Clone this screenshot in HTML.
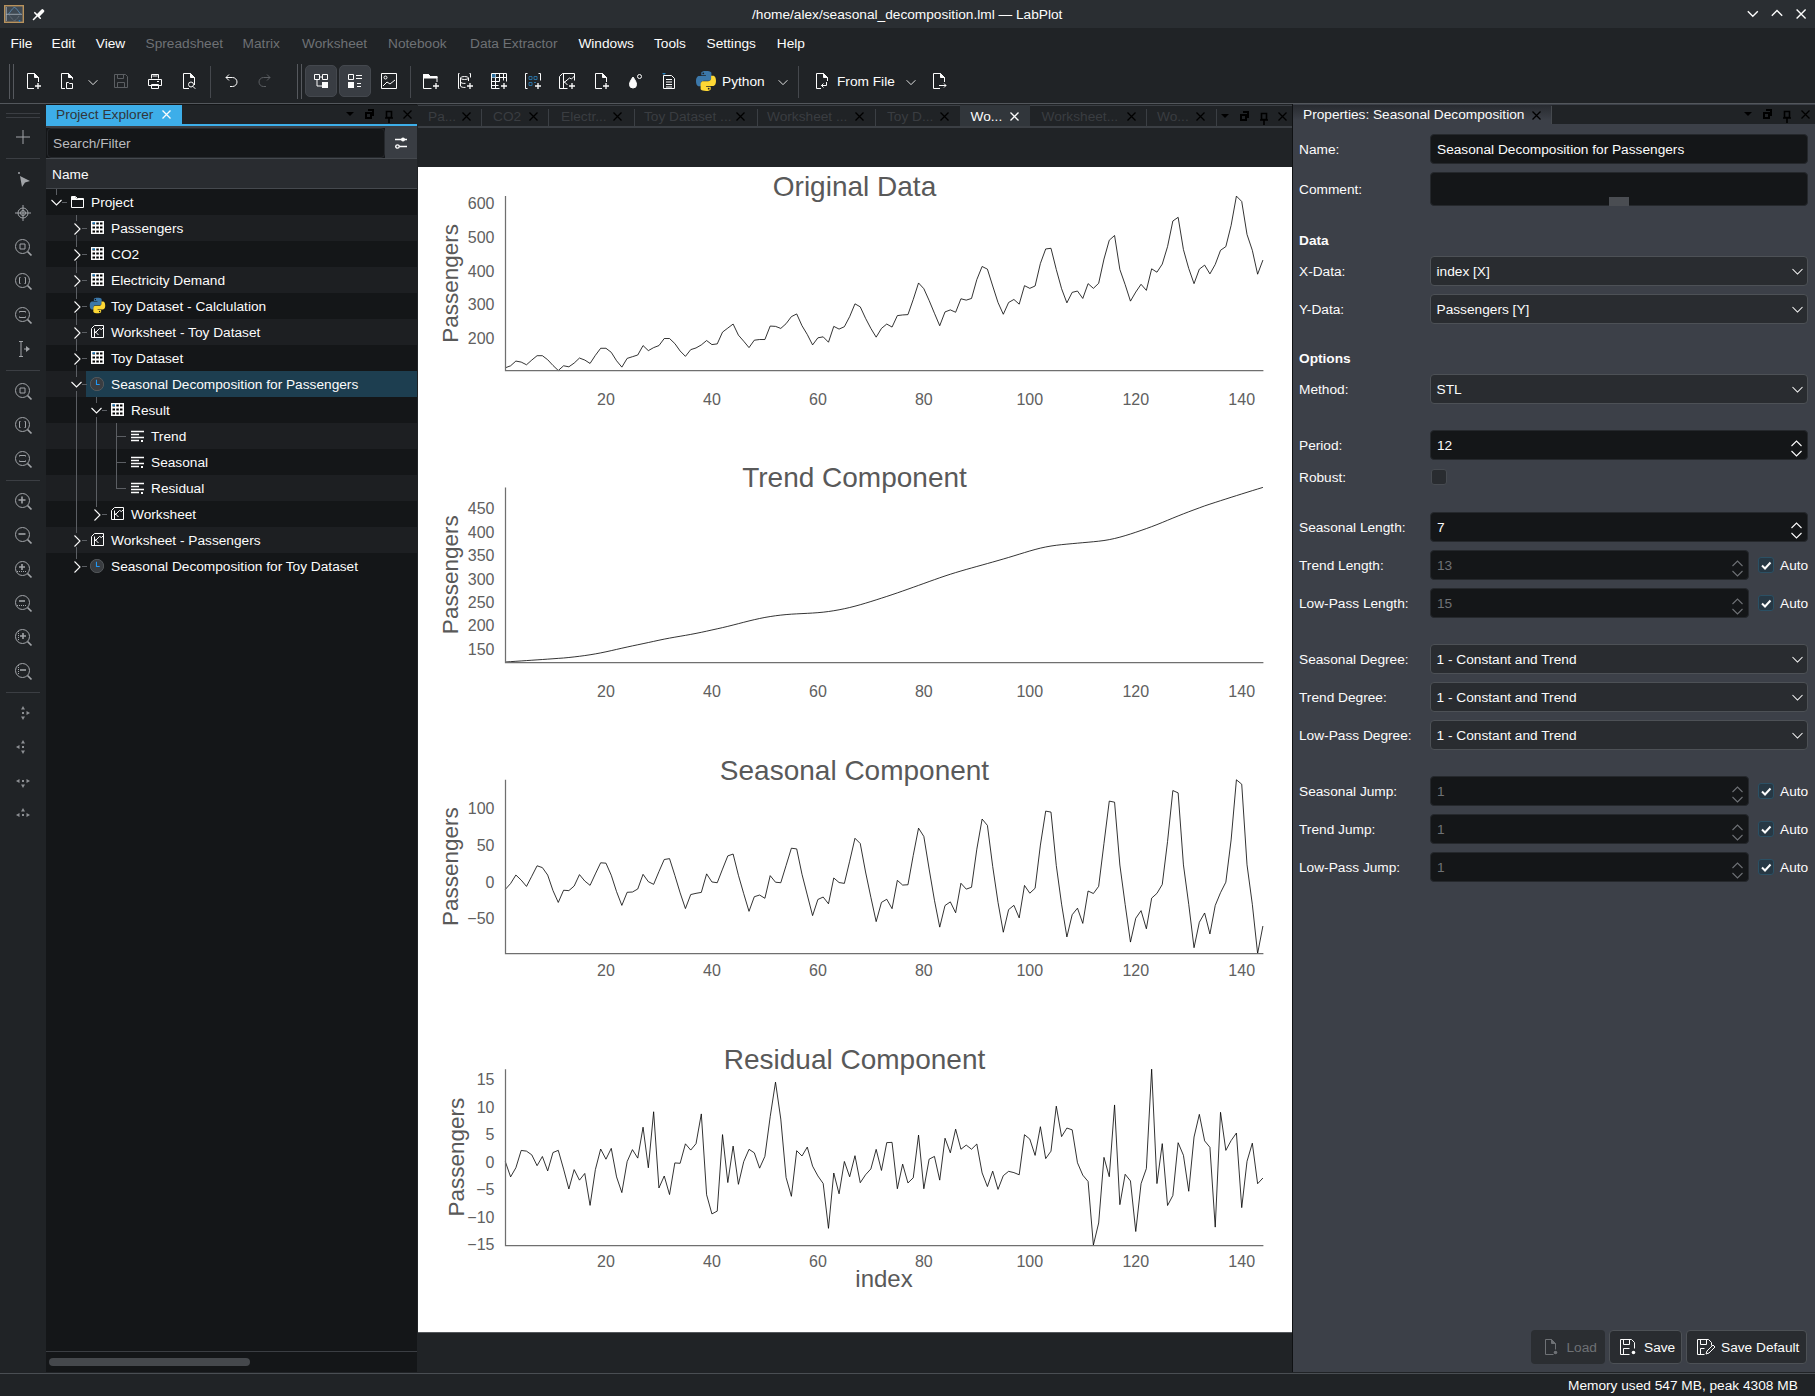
<!DOCTYPE html>
<html><head><meta charset="utf-8"><title>LabPlot</title>
<style>
html,body{margin:0;padding:0;width:1815px;height:1396px;overflow:hidden;background:#202326;font-family:"Liberation Sans", sans-serif;}
.r{position:absolute;}
.t{position:absolute;white-space:nowrap;line-height:20px;height:20px;}
svg text{font-family:"Liberation Sans", sans-serif;}
</style></head><body>
<div class="r" style="left:0px;top:0px;width:1815px;height:28px;background:#2a2e32;"></div><div class="r" style="left:0px;top:28px;width:1815px;height:75px;background:#202326;"></div><div class="r" style="left:0px;top:103px;width:1815px;height:1px;background:#53575c;"></div><div class="r" style="left:0px;top:104px;width:46px;height:1268px;background:#202326;"></div><div class="r" style="left:46px;top:104px;width:371px;height:1268px;background:#141618;"></div><div class="r" style="left:417px;top:104px;width:876px;height:1268px;background:#202326;"></div><div class="r" style="left:418px;top:167px;width:874px;height:1165px;background:#ffffff;"></div><div class="r" style="left:1293px;top:104px;width:522px;height:1268px;background:#3c4048;"></div><div class="r" style="left:0px;top:1373px;width:1815px;height:1px;background:#4a4e53;"></div><div class="r" style="left:0px;top:1374px;width:1815px;height:22px;background:#202326;"></div><svg class="r" style="left:4px;top:5px" width="20" height="18" viewBox="0 0 20 18"><rect x="0.7" y="0.7" width="18.6" height="16.6" fill="#3f4953" stroke="#b8925c" stroke-width="1.4"/><path d="M2.3 2v14 M2 9.3h16" stroke="#aab4bc" stroke-width="0.8" fill="none"/><path d="M4.5 9C7 6 9 2.5 10.5 2.5S14 6 16.5 9" stroke="#5d8fb8" stroke-width="0.9" fill="none"/><path d="M5.5 10.5C7.5 13 9 15.5 10.5 15.5S13.5 13 15.5 10.5" stroke="#7b848c" stroke-width="0.7" fill="none" stroke-dasharray="1 0.6"/><circle cx="15.5" cy="15.8" r="0.9" fill="#1d7fd0"/></svg><svg class="r" style="left:32px;top:7px" width="14" height="14" viewBox="0 0 14 14"><path d="M1.5 12.5L5.5 8.5" stroke="#fcfcfc" stroke-width="1.6" stroke-linecap="round"/><path d="M2.8 5.7L8.3 11.2" stroke="#fcfcfc" stroke-width="1.6" stroke-linecap="round"/><path d="M4.5 7.5L9.5 2.5a1.2 1.2 0 0 1 1.7 0l.8.8a1.2 1.2 0 0 1 0 1.7L7 10z" fill="#fcfcfc"/></svg><div class="t" style="left:752px;top:5px;font-size:13.7px;color:#fcfcfc;">/home/alex/seasonal_decomposition.lml — LabPlot</div><svg class="r" style="left:1747px;top:10px;color:#fcfcfc;" width="12" height="12" viewBox="0 0 12 12" fill="none" stroke="#fcfcfc" stroke-width="1"><path d="M.8 1.2l5 5 5-5" stroke-width="1.4"/></svg><svg class="r" style="left:1771px;top:9px;color:#fcfcfc;" width="12" height="12" viewBox="0 0 12 12" fill="none" stroke="#fcfcfc" stroke-width="1"><path d="M.8 6.8l5.2-5.2 5.2 5.2" stroke-width="1.4"/></svg><svg class="r" style="left:1796px;top:9px;color:#fcfcfc;" width="10.5" height="10.5" viewBox="0 0 10.5 10.5" fill="none" stroke="#fcfcfc" stroke-width="1"><path d="M.6 .6l9 9M9.6 .6l-9 9" stroke-width="1.4"/></svg><div class="t" style="left:10.4px;top:33.5px;font-size:13.7px;color:#fcfcfc;">File</div><div class="t" style="left:51.6px;top:33.5px;font-size:13.7px;color:#fcfcfc;">Edit</div><div class="t" style="left:95.8px;top:33.5px;font-size:13.7px;color:#fcfcfc;">View</div><div class="t" style="left:145.5px;top:33.5px;font-size:13.7px;color:#6e7175;">Spreadsheet</div><div class="t" style="left:242.6px;top:33.5px;font-size:13.7px;color:#6e7175;">Matrix</div><div class="t" style="left:302px;top:33.5px;font-size:13.7px;color:#6e7175;">Worksheet</div><div class="t" style="left:388px;top:33.5px;font-size:13.7px;color:#6e7175;">Notebook</div><div class="t" style="left:470px;top:33.5px;font-size:13.7px;color:#6e7175;">Data Extractor</div><div class="t" style="left:578.4px;top:33.5px;font-size:13.7px;color:#fcfcfc;">Windows</div><div class="t" style="left:654px;top:33.5px;font-size:13.7px;color:#fcfcfc;">Tools</div><div class="t" style="left:706.5px;top:33.5px;font-size:13.7px;color:#fcfcfc;">Settings</div><div class="t" style="left:776.8px;top:33.5px;font-size:13.7px;color:#fcfcfc;">Help</div><div class="r" style="left:9px;top:64px;width:1px;height:35px;background:#56595e;"></div><div class="r" style="left:13px;top:64px;width:1px;height:35px;background:#56595e;"></div><svg class="r" style="left:25px;top:73px;color:#fcfcfc;" width="16" height="16" viewBox="0 0 16 16" fill="none" stroke="#fcfcfc" stroke-width="1"><path d="M2.5 15.5V.5h7l4 4V9M2.5 15.5H9"/><path d="M9.5 .5v4h4z" fill="currentColor"/><path d="M13 10v6M10 13h6" stroke-width="1.3"/></svg><svg class="r" style="left:59px;top:73px;color:#fcfcfc;" width="16" height="16" viewBox="0 0 16 16" fill="none" stroke="#fcfcfc" stroke-width="1"><path d="M2.5 15.5V.5h7l4 4v2M2.5 15.5H6"/><path d="M9.5 .5v4h4z" fill="currentColor"/><path d="M7.5 9.5h2l1 1h3v5h-6z"/></svg><svg class="r" style="left:113px;top:73px;color:#5b5e62;" width="16" height="16" viewBox="0 0 16 16" fill="none" stroke="#5b5e62" stroke-width="1"><path d="M1.5 1.5h11l2 2v11h-13z M4.5 1.5v4h6v-4 M4.5 14.5v-5h7v5"/></svg><svg class="r" style="left:147px;top:73px;color:#fcfcfc;" width="16" height="16" viewBox="0 0 16 16" fill="none" stroke="#fcfcfc" stroke-width="1"><path d="M4.5 5.5v-4h7v4 M1.5 12.5v-6h13v6z M4.5 11.5v4h7v-4z M10 8.5h2"/><path d="M5.5 3h5"/></svg><svg class="r" style="left:181px;top:73px;color:#fcfcfc;" width="16" height="16" viewBox="0 0 16 16" fill="none" stroke="#fcfcfc" stroke-width="1"><path d="M2.5 15.5V.5h7l4 4V12M2.5 15.5H8"/><path d="M9.5 .5v4h4z" fill="currentColor"/><circle cx="10" cy="11.5" r="2.5"/><path d="M11.8 13.3l2.5 2.5"/></svg><svg class="r" style="left:223px;top:73px;color:#fcfcfc;" width="16" height="16" viewBox="0 0 16 16" fill="none" stroke="#fcfcfc" stroke-width="1"><path d="M3 4.5h6.5a4.5 4.5 0 0 1 0 9H7"/><path d="M6 1.5l-3 3 3 3"/></svg><svg class="r" style="left:257px;top:73px;color:#5b5e62;" width="16" height="16" viewBox="0 0 16 16" fill="none" stroke="#5b5e62" stroke-width="1"><path d="M13 4.5H6.5a4.5 4.5 0 0 0 0 9H9"/><path d="M10 1.5l3 3-3 3"/></svg><svg class="r" style="left:381px;top:73px;color:#fcfcfc;" width="16" height="16" viewBox="0 0 16 16" fill="none" stroke="#fcfcfc" stroke-width="1"><path d="M.5 .5h15v15H.5z"/><circle cx="4.5" cy="4.5" r="1.5"/><path d="M2 13l4-4 3 2 5-4"/></svg><svg class="r" style="left:423px;top:73px;color:#fcfcfc;" width="16" height="16" viewBox="0 0 16 16" fill="none" stroke="#fcfcfc" stroke-width="1"><path d="M.5 15.5v-14h5l2 2h6.5V9 M.5 15.5h8"/><path d="M.5 1.5h5l2 2h6.5V5H.5z" fill="currentColor"/><path d="M13 10v6M10 13h6" stroke-width="1.3"/></svg><svg class="r" style="left:457px;top:73px;color:#fcfcfc;" width="16" height="16" viewBox="0 0 16 16" fill="none" stroke="#fcfcfc" stroke-width="1"><path d="M2.5 .5h-1v15h1 M12.5 .5h1v4"/><ellipse cx="7.5" cy="5" rx="4" ry="1.5"/><path d="M3.5 5v8a4 1.5 0 0 0 5 1.4 M3.5 9a4 1.5 0 0 0 5 1.4 M11.5 5v3"/><path d="M13 10v6M10 13h6" stroke-width="1.3"/></svg><svg class="r" style="left:491px;top:73px;color:#fcfcfc;" width="16" height="16" viewBox="0 0 16 16" fill="none" stroke="#fcfcfc" stroke-width="1"><path d="M.5 .5h15v8 M.5 .5v15h8 M.5 4.5h15 M.5 8.5h8 M.5 12.5h7 M4.5 .5v15 M8.5 .5v8 M12.5 .5v7"/><path d="M1 1h3.5v3.5H1z" fill="#2a6f9e" stroke="none"/><path d="M13 10v6M10 13h6" stroke-width="1.3"/></svg><svg class="r" style="left:525px;top:73px;color:#fcfcfc;" width="16" height="16" viewBox="0 0 16 16" fill="none" stroke="#fcfcfc" stroke-width="1"><path d="M2.5 .5h-2v15h2 M13.5 .5h2v7 M3.5 15.5"/><path d="M4 3.5h3v3H4z M9 3.5h3v3H9z M4 9.5h3v3H4z M9 9.5h2" stroke="#2a6f9e"/><path d="M13 10v6M10 13h6" stroke-width="1.3"/></svg><svg class="r" style="left:559px;top:73px;color:#fcfcfc;" width="16" height="16" viewBox="0 0 16 16" fill="none" stroke="#fcfcfc" stroke-width="1"><path d="M.5 15.5V3.5l3-3h12v7 M.5 15.5h8 M4.5 15.5V.5 M4.5 8l4 4 M4.5 10l6-5 2 1 3-3"/><path d="M13 10v6M10 13h6" stroke-width="1.3"/></svg><svg class="r" style="left:593px;top:73px;color:#fcfcfc;" width="16" height="16" viewBox="0 0 16 16" fill="none" stroke="#fcfcfc" stroke-width="1"><path d="M2.5 15.5V.5h7l4 4V9M2.5 15.5H9"/><path d="M9.5 .5v4h4z" fill="currentColor"/><path d="M13 10v6M10 13h6" stroke-width="1.3"/></svg><svg class="r" style="left:627px;top:73px;color:#fcfcfc;" width="16" height="16" viewBox="0 0 16 16" fill="none" stroke="#fcfcfc" stroke-width="1"><path d="M6 4C4 7 2.5 9 2.5 11.5a3.5 3.5 0 0 0 7 0C9.5 9 8 7 6 4z" fill="currentColor"/><circle cx="12.5" cy="3.5" r="2"/></svg><svg class="r" style="left:661px;top:73px;color:#fcfcfc;" width="16" height="16" viewBox="0 0 16 16" fill="none" stroke="#fcfcfc" stroke-width="1"><path d="M2.5 2.5h8l3 3v10h-11z M5 6.5h6 M5 9h6 M5 11.5h6 M5 14h6"/><path d="M1 0h4l-2 2z" fill="#2980b9" stroke="none"/></svg><svg class="r" style="left:814px;top:73px;color:#fcfcfc;" width="16" height="16" viewBox="0 0 16 16" fill="none" stroke="#fcfcfc" stroke-width="1"><path d="M2.5 15.5V.5h7l4 4V8M2.5 15.5H7"/><path d="M9.5 .5v4h4z" fill="currentColor"/><path d="M12.5 9v3.5h-5 M9.5 10.5l-2 2 2 2"/></svg><svg class="r" style="left:931px;top:73px;color:#fcfcfc;" width="16" height="16" viewBox="0 0 16 16" fill="none" stroke="#fcfcfc" stroke-width="1"><path d="M2.5 15.5V.5h7l4 4V9M2.5 15.5H9"/><path d="M9.5 .5v4h4z" fill="currentColor"/><path d="M8 12.5h7 M13 10.5l2 2-2 2"/></svg><svg class="r" style="left:86px;top:75px;color:#fcfcfc;" width="14" height="14" viewBox="0 0 16 16" fill="none" stroke="#fcfcfc" stroke-width="1"><path d="M3 6l5 5 5-5"/></svg><svg class="r" style="left:776px;top:75px;color:#fcfcfc;" width="14" height="14" viewBox="0 0 16 16" fill="none" stroke="#fcfcfc" stroke-width="1"><path d="M3 6l5 5 5-5"/></svg><svg class="r" style="left:904px;top:75px;color:#fcfcfc;" width="14" height="14" viewBox="0 0 16 16" fill="none" stroke="#fcfcfc" stroke-width="1"><path d="M3 6l5 5 5-5"/></svg><div class="r" style="left:210px;top:66px;width:1px;height:32px;background:#45484d;"></div><div class="r" style="left:297px;top:64px;width:1px;height:35px;background:#56595e;"></div><div class="r" style="left:301px;top:64px;width:1px;height:35px;background:#56595e;"></div><div class="r" style="left:410px;top:66px;width:1px;height:32px;background:#45484d;"></div><div class="r" style="left:798px;top:66px;width:1px;height:32px;background:#45484d;"></div><div class="r" style="left:305px;top:65px;width:32px;height:32px;background:#393d43;border:1px solid #44484e;border-radius:5px;box-sizing:border-box;"></div><div class="r" style="left:339px;top:65px;width:32px;height:32px;background:#393d43;border:1px solid #44484e;border-radius:5px;box-sizing:border-box;"></div><svg class="r" style="left:313px;top:73px;color:#fcfcfc;" width="16" height="16" viewBox="0 0 16 16" fill="none" stroke="#fcfcfc" stroke-width="1"><path d="M1.5 1.5h5v5h-5z M9.5 1.5h5v5h-5z M4 6.5v6.5h5 M6.5 4h3"/><path d="M9 9h6v6H9z" fill="currentColor" stroke="none"/></svg><svg class="r" style="left:347px;top:73px;color:#fcfcfc;" width="16" height="16" viewBox="0 0 16 16" fill="none" stroke="#fcfcfc" stroke-width="1"><path d="M1.5 1.5h5v5h-5z M9 2.5h6 M9 5.5h6 M10 10.5h4 M10 13.5h4"/><path d="M1 9h6v6H1z" fill="currentColor" stroke="none"/></svg><svg class="r" style="left:695px;top:70px" width="22" height="22" viewBox="0 0 22 22"><path d="M10.8 1C6 1 6.3 3 6.3 3v2.2h4.6v.7H4.5S1 5.5 1 11s3 5.3 3 5.3h1.9v-2.6s-.1-3 3-3h4.6s2.9 0 2.9-2.8V3.2S16.8 1 10.8 1zM8.3 2.4a.9.9 0 1 1 0 1.8.9.9 0 0 1 0-1.8z" fill="#3c78aa"/><path d="M11.2 21c4.8 0 4.5-2 4.5-2v-2.2h-4.6v-.7h6.4S21 16.5 21 11s-3-5.3-3-5.3h-1.9v2.6s.1 3-3 3H8.5s-2.9 0-2.9 2.8v4.7S5.2 21 11.2 21zm2.5-1.4a.9.9 0 1 1 0-1.8.9.9 0 0 1 0 1.8z" fill="#fdd835"/></svg><div class="t" style="left:722px;top:72px;font-size:13.7px;color:#fcfcfc;">Python</div><div class="t" style="left:837px;top:72px;font-size:13.7px;color:#fcfcfc;">From File</div><div class="r" style="left:6px;top:113px;width:34px;height:1px;background:#3b3e43;"></div><div class="r" style="left:6px;top:117px;width:34px;height:1px;background:#3b3e43;"></div><div class="r" style="left:6px;top:158px;width:34px;height:1px;background:#3b3e43;"></div><div class="r" style="left:6px;top:370px;width:34px;height:1px;background:#3b3e43;"></div><div class="r" style="left:6px;top:480px;width:34px;height:1px;background:#3b3e43;"></div><div class="r" style="left:6px;top:692px;width:34px;height:1px;background:#3b3e43;"></div><svg class="r" style="left:15px;top:129px;color:#a1a4a8;" width="16" height="16" viewBox="0 0 16 16" fill="none" stroke="#a1a4a8" stroke-width="1"><path d="M8 1v14M1 8h14"/></svg><svg class="r" style="left:15px;top:171px;color:#a1a4a8;" width="16" height="16" viewBox="0 0 16 16" fill="none" stroke="#a1a4a8" stroke-width="1"><path d="M5 5l10 5-5 1.5L7 16z" fill="currentColor" stroke="none"/><circle cx="4" cy="2" r="1" fill="currentColor" stroke="none"/></svg><svg class="r" style="left:15px;top:205px;color:#a1a4a8;" width="16" height="16" viewBox="0 0 16 16" fill="none" stroke="#a1a4a8" stroke-width="1"><circle cx="8" cy="8" r="5"/><circle cx="8" cy="8" r="2.5"/><path d="M8 0v16M0 8h16"/></svg><svg class="r" style="left:15px;top:239px;color:#a1a4a8;" width="18" height="18" viewBox="0 0 18 18" fill="none" stroke="#a1a4a8" stroke-width="1"><circle cx="7.5" cy="7.5" r="7"/><path d="M12.5 12.5L16.5 16.5" stroke-width="1.7"/><path d="M5 5h5v5H5z"/></svg><svg class="r" style="left:15px;top:273px;color:#a1a4a8;" width="18" height="18" viewBox="0 0 18 18" fill="none" stroke="#a1a4a8" stroke-width="1"><circle cx="7.5" cy="7.5" r="7"/><path d="M12.5 12.5L16.5 16.5" stroke-width="1.7"/><path d="M5.5 4.5h-1v6h1 M9.5 4.5h1v6h-1"/></svg><svg class="r" style="left:15px;top:307px;color:#a1a4a8;" width="18" height="18" viewBox="0 0 18 18" fill="none" stroke="#a1a4a8" stroke-width="1"><circle cx="7.5" cy="7.5" r="7"/><path d="M12.5 12.5L16.5 16.5" stroke-width="1.7"/><path d="M4.5 5.5v-1h6v1 M4.5 9.5v1h6v-1"/></svg><svg class="r" style="left:15px;top:341px;color:#a1a4a8;" width="16" height="16" viewBox="0 0 16 16" fill="none" stroke="#a1a4a8" stroke-width="1"><path d="M4 .5h4M6 .5v15M4 15.5h4 M9 8h4"/><path d="M11 5l4 3-4 3z" fill="currentColor" stroke="none"/></svg><svg class="r" style="left:15px;top:383px;color:#a1a4a8;" width="18" height="18" viewBox="0 0 18 18" fill="none" stroke="#a1a4a8" stroke-width="1"><circle cx="7.5" cy="7.5" r="7"/><path d="M12.5 12.5L16.5 16.5" stroke-width="1.7"/><path d="M5 5h5v5H5z"/></svg><svg class="r" style="left:15px;top:417px;color:#a1a4a8;" width="18" height="18" viewBox="0 0 18 18" fill="none" stroke="#a1a4a8" stroke-width="1"><circle cx="7.5" cy="7.5" r="7"/><path d="M12.5 12.5L16.5 16.5" stroke-width="1.7"/><path d="M5.5 4.5h-1v6h1 M9.5 4.5h1v6h-1"/></svg><svg class="r" style="left:15px;top:451px;color:#a1a4a8;" width="18" height="18" viewBox="0 0 18 18" fill="none" stroke="#a1a4a8" stroke-width="1"><circle cx="7.5" cy="7.5" r="7"/><path d="M12.5 12.5L16.5 16.5" stroke-width="1.7"/><path d="M4.5 5.5v-1h6v1 M4.5 9.5v1h6v-1"/></svg><svg class="r" style="left:15px;top:493px;color:#a1a4a8;" width="18" height="18" viewBox="0 0 18 18" fill="none" stroke="#a1a4a8" stroke-width="1"><circle cx="7.5" cy="7.5" r="7"/><path d="M12.5 12.5L16.5 16.5" stroke-width="1.7"/><path d="M7 3.5v7M3.5 7h7" stroke-width="1.6"/></svg><svg class="r" style="left:15px;top:527px;color:#a1a4a8;" width="18" height="18" viewBox="0 0 18 18" fill="none" stroke="#a1a4a8" stroke-width="1"><circle cx="7.5" cy="7.5" r="7"/><path d="M12.5 12.5L16.5 16.5" stroke-width="1.7"/><path d="M3.5 7h7" stroke-width="1.6"/></svg><svg class="r" style="left:15px;top:561px;color:#a1a4a8;" width="18" height="18" viewBox="0 0 18 18" fill="none" stroke="#a1a4a8" stroke-width="1"><circle cx="7.5" cy="7.5" r="7"/><path d="M12.5 12.5L16.5 16.5" stroke-width="1.7"/><path d="M7 3v6M4 6h6" stroke-width="1.6"/><path d="M2 10.5h10" stroke-dasharray="1 1"/></svg><svg class="r" style="left:15px;top:595px;color:#a1a4a8;" width="18" height="18" viewBox="0 0 18 18" fill="none" stroke="#a1a4a8" stroke-width="1"><circle cx="7.5" cy="7.5" r="7"/><path d="M12.5 12.5L16.5 16.5" stroke-width="1.7"/><path d="M4 6h6" stroke-width="1.6"/><path d="M2 10.5h10" stroke-dasharray="1 1"/></svg><svg class="r" style="left:15px;top:629px;color:#a1a4a8;" width="18" height="18" viewBox="0 0 18 18" fill="none" stroke="#a1a4a8" stroke-width="1"><circle cx="7.5" cy="7.5" r="7"/><path d="M12.5 12.5L16.5 16.5" stroke-width="1.7"/><path d="M8 4v6M5 7h6" stroke-width="1.6"/><path d="M3.5 2v10" stroke-dasharray="1 1"/></svg><svg class="r" style="left:15px;top:663px;color:#a1a4a8;" width="18" height="18" viewBox="0 0 18 18" fill="none" stroke="#a1a4a8" stroke-width="1"><circle cx="7.5" cy="7.5" r="7"/><path d="M12.5 12.5L16.5 16.5" stroke-width="1.7"/><path d="M5 7h6" stroke-width="1.6"/><path d="M3.5 2v10" stroke-dasharray="1 1"/></svg><svg class="r" style="left:15px;top:705px;color:#8d9094;" width="16" height="16" viewBox="0 0 16 16" fill="none" stroke="#8d9094" stroke-width="1"><g fill="currentColor" stroke="none"><rect x="7" y="7" width="2" height="2"/><path d="M6 4.5L8 1l2 3.5z"/><path d="M6 11.5L8 15l2-3.5z"/><path d="M11.5 6L15 8l-3.5 2z"/></g></svg><svg class="r" style="left:15px;top:739px;color:#8d9094;" width="16" height="16" viewBox="0 0 16 16" fill="none" stroke="#8d9094" stroke-width="1"><g fill="currentColor" stroke="none"><rect x="7" y="7" width="2" height="2"/><path d="M6 4.5L8 1l2 3.5z"/><path d="M6 11.5L8 15l2-3.5z"/><path d="M4.5 6L1 8l3.5 2z"/></g></svg><svg class="r" style="left:15px;top:773px;color:#8d9094;" width="16" height="16" viewBox="0 0 16 16" fill="none" stroke="#8d9094" stroke-width="1"><g fill="currentColor" stroke="none"><rect x="7" y="7" width="2" height="2"/><path d="M6 11.5L8 15l2-3.5z"/><path d="M4.5 6L1 8l3.5 2z"/><path d="M11.5 6L15 8l-3.5 2z"/></g></svg><svg class="r" style="left:15px;top:807px;color:#8d9094;" width="16" height="16" viewBox="0 0 16 16" fill="none" stroke="#8d9094" stroke-width="1"><g fill="currentColor" stroke="none"><rect x="7" y="7" width="2" height="2"/><path d="M6 4.5L8 1l2 3.5z"/><path d="M4.5 6L1 8l3.5 2z"/><path d="M11.5 6L15 8l-3.5 2z"/></g></svg><div class="r" style="left:46px;top:105px;width:371px;height:19px;background:#202326;"></div><div class="r" style="left:46px;top:105px;width:136px;height:21px;background:#3daee9;"></div><div class="t" style="left:56px;top:104.5px;font-size:13.7px;color:#31363b;">Project Explorer</div><svg class="r" style="left:161.5px;top:110px;color:#fcfcfc;" width="9" height="9" viewBox="0 0 9 9" fill="none" stroke="#fcfcfc" stroke-width="1"><path d="M.5 .5l8 8M8.5 .5l-8 8" stroke-width="1.3"/></svg><div class="r" style="left:46px;top:124px;width:371px;height:2px;background:#3daee9;"></div><div class="r" style="left:46px;top:126px;width:339px;height:2px;background:#3a3d42;"></div><div class="r" style="left:385px;top:126px;width:32px;height:32px;background:#393d43;"></div><div class="r" style="left:47px;top:128px;width:338px;height:30px;background:#141618;border-radius:4px;box-sizing:border-box;border:1px solid #25282c;"></div><div class="t" style="left:53px;top:134px;font-size:13.7px;color:#b9bbbe;">Search/Filter</div><svg class="r" style="left:393px;top:135px;color:#fcfcfc;" width="16" height="16" viewBox="0 0 16 16" fill="none" stroke="#fcfcfc" stroke-width="1"><path d="M2 4.5h12M2 11.5h12" stroke-width="1.6"/><circle cx="10" cy="4.5" r="2" fill="currentColor" stroke="none"/><circle cx="4.5" cy="11.5" r="1.7" fill="#393d43" stroke-width="1.3"/></svg><div class="r" style="left:46px;top:158px;width:371px;height:1px;background:#45494e;"></div><div class="r" style="left:46px;top:159px;width:371px;height:29px;background:#292c30;"></div><div class="t" style="left:52px;top:165px;font-size:13.7px;color:#fcfcfc;">Name</div><div class="r" style="left:46px;top:188px;width:371px;height:1px;background:#45494e;"></div><svg class="r" style="left:346px;top:112px;color:#000000;" width="8" height="8" viewBox="0 0 8 8" fill="none" stroke="#000000" stroke-width="1"><path d="M0 0h8L4 4z" fill="currentColor" stroke="none"/></svg><svg class="r" style="left:365px;top:109px;color:#000000;" width="10" height="10" viewBox="0 0 10 10" fill="none" stroke="#000000" stroke-width="1"><path d="M3 1h5v5H6 M1 4h5v5H1z" stroke-width="2" stroke-linejoin="miter"/></svg><svg class="r" style="left:385px;top:109px;color:#000000;height:12px;overflow:visible" width="8" height="8" viewBox="0 0 8 8" fill="none" stroke="#000000" stroke-width="1"><path d="M1.5 .5h5v6h-5z M0 7h8 M4 7v5" stroke-width="1.6"/><path d="M3.2 1.3h1.6v5H3.2z" fill="none" stroke="none"/></svg><svg class="r" style="left:403px;top:110px;color:#000000;" width="9" height="9" viewBox="0 0 9 9" fill="none" stroke="#000000" stroke-width="1"><path d="M.5 .5l8 8M8.5 .5l-8 8" stroke-width="1.3"/></svg><svg class="r" style="left:50.5px;top:199px;color:#fcfcfc;" width="11" height="11" viewBox="0 0 11 11" fill="none" stroke="#fcfcfc" stroke-width="1"><path d="M.5 1l5 5 5-5" stroke-width="1.1"/></svg><div class="r" style="left:62px;top:202px;width:5px;height:1px;background:#5b5e63;"></div><svg class="r" style="left:71px;top:195px;color:#fcfcfc;" width="14" height="14" viewBox="0 0 14 14" fill="none" stroke="#fcfcfc" stroke-width="1"><path d="M.5 1.5v11h12v-9h-6l-2-2z" fill="none"/><path d="M1 2h3.3l2 2H12V5H1z" fill="currentColor" stroke="none"/><path d="M.5 4.5h12"/></svg><div class="t" style="left:91px;top:193px;font-size:13.7px;color:#fcfcfc;">Project</div><div class="r" style="left:46px;top:215px;width:371px;height:26px;background:#1d1f22;"></div><svg class="r" style="left:73.5px;top:222.5px;color:#fcfcfc;" width="12" height="12" viewBox="0 0 12 12" fill="none" stroke="#fcfcfc" stroke-width="1"><path d="M.5 .5l5.5 5.5-5.5 5.5" stroke-width="1.1"/></svg><div class="r" style="left:82px;top:228px;width:5px;height:1px;background:#5b5e63;"></div><svg class="r" style="left:91px;top:221px;color:#fcfcfc;" width="13" height="13" viewBox="0 0 13 13" fill="none" stroke="#fcfcfc" stroke-width="1"><rect x="0" y="0" width="13" height="13" fill="#fcfcfc" stroke="none"/><g fill="#000" stroke="none"><rect x="1.5" y="1.5" width="2.5" height="2"/><rect x="5.3" y="1.5" width="2.5" height="2"/><rect x="9" y="1.5" width="2.5" height="2"/><rect x="1.5" y="5.5" width="2.5" height="2"/><rect x="5.3" y="5.5" width="2.5" height="2"/><rect x="9" y="5.5" width="2.5" height="2"/><rect x="1.5" y="9.5" width="2.5" height="2"/><rect x="5.3" y="9.5" width="2.5" height="2"/><rect x="9" y="9.5" width="2.5" height="2"/></g><rect x="1.5" y="1.5" width="2.5" height="1.2" fill="#1d99f3" stroke="none"/></svg><div class="t" style="left:111px;top:219px;font-size:13.7px;color:#fcfcfc;">Passengers</div><svg class="r" style="left:73.5px;top:248.5px;color:#fcfcfc;" width="12" height="12" viewBox="0 0 12 12" fill="none" stroke="#fcfcfc" stroke-width="1"><path d="M.5 .5l5.5 5.5-5.5 5.5" stroke-width="1.1"/></svg><div class="r" style="left:82px;top:254px;width:5px;height:1px;background:#5b5e63;"></div><svg class="r" style="left:91px;top:247px;color:#fcfcfc;" width="13" height="13" viewBox="0 0 13 13" fill="none" stroke="#fcfcfc" stroke-width="1"><rect x="0" y="0" width="13" height="13" fill="#fcfcfc" stroke="none"/><g fill="#000" stroke="none"><rect x="1.5" y="1.5" width="2.5" height="2"/><rect x="5.3" y="1.5" width="2.5" height="2"/><rect x="9" y="1.5" width="2.5" height="2"/><rect x="1.5" y="5.5" width="2.5" height="2"/><rect x="5.3" y="5.5" width="2.5" height="2"/><rect x="9" y="5.5" width="2.5" height="2"/><rect x="1.5" y="9.5" width="2.5" height="2"/><rect x="5.3" y="9.5" width="2.5" height="2"/><rect x="9" y="9.5" width="2.5" height="2"/></g><rect x="1.5" y="1.5" width="2.5" height="1.2" fill="#1d99f3" stroke="none"/></svg><div class="t" style="left:111px;top:245px;font-size:13.7px;color:#fcfcfc;">CO2</div><div class="r" style="left:46px;top:267px;width:371px;height:26px;background:#1d1f22;"></div><svg class="r" style="left:73.5px;top:274.5px;color:#fcfcfc;" width="12" height="12" viewBox="0 0 12 12" fill="none" stroke="#fcfcfc" stroke-width="1"><path d="M.5 .5l5.5 5.5-5.5 5.5" stroke-width="1.1"/></svg><div class="r" style="left:82px;top:280px;width:5px;height:1px;background:#5b5e63;"></div><svg class="r" style="left:91px;top:273px;color:#fcfcfc;" width="13" height="13" viewBox="0 0 13 13" fill="none" stroke="#fcfcfc" stroke-width="1"><rect x="0" y="0" width="13" height="13" fill="#fcfcfc" stroke="none"/><g fill="#000" stroke="none"><rect x="1.5" y="1.5" width="2.5" height="2"/><rect x="5.3" y="1.5" width="2.5" height="2"/><rect x="9" y="1.5" width="2.5" height="2"/><rect x="1.5" y="5.5" width="2.5" height="2"/><rect x="5.3" y="5.5" width="2.5" height="2"/><rect x="9" y="5.5" width="2.5" height="2"/><rect x="1.5" y="9.5" width="2.5" height="2"/><rect x="5.3" y="9.5" width="2.5" height="2"/><rect x="9" y="9.5" width="2.5" height="2"/></g><rect x="1.5" y="1.5" width="2.5" height="1.2" fill="#1d99f3" stroke="none"/></svg><div class="t" style="left:111px;top:271px;font-size:13.7px;color:#fcfcfc;">Electricity Demand</div><svg class="r" style="left:73.5px;top:300.5px;color:#fcfcfc;" width="12" height="12" viewBox="0 0 12 12" fill="none" stroke="#fcfcfc" stroke-width="1"><path d="M.5 .5l5.5 5.5-5.5 5.5" stroke-width="1.1"/></svg><div class="r" style="left:82px;top:306px;width:5px;height:1px;background:#5b5e63;"></div><svg class="r" style="left:89px;top:297px" width="17" height="17" viewBox="0 0 22 22"><path d="M10.8 1C6 1 6.3 3 6.3 3v2.2h4.6v.7H4.5S1 5.5 1 11s3 5.3 3 5.3h1.9v-2.6s-.1-3 3-3h4.6s2.9 0 2.9-2.8V3.2S16.8 1 10.8 1zM8.3 2.4a.9.9 0 1 1 0 1.8.9.9 0 0 1 0-1.8z" fill="#3c78aa"/><path d="M11.2 21c4.8 0 4.5-2 4.5-2v-2.2h-4.6v-.7h6.4S21 16.5 21 11s-3-5.3-3-5.3h-1.9v2.6s.1 3-3 3H8.5s-2.9 0-2.9 2.8v4.7S5.2 21 11.2 21zm2.5-1.4a.9.9 0 1 1 0-1.8.9.9 0 0 1 0 1.8z" fill="#fdd835"/></svg><div class="t" style="left:111px;top:297px;font-size:13.7px;color:#fcfcfc;">Toy Dataset - Calclulation</div><div class="r" style="left:46px;top:319px;width:371px;height:26px;background:#1d1f22;"></div><svg class="r" style="left:73.5px;top:326.5px;color:#fcfcfc;" width="12" height="12" viewBox="0 0 12 12" fill="none" stroke="#fcfcfc" stroke-width="1"><path d="M.5 .5l5.5 5.5-5.5 5.5" stroke-width="1.1"/></svg><div class="r" style="left:82px;top:332px;width:5px;height:1px;background:#5b5e63;"></div><svg class="r" style="left:91px;top:325px;color:#fcfcfc;" width="14" height="14" viewBox="0 0 14 14" fill="none" stroke="#fcfcfc" stroke-width="1"><path d="M.5 12.5V3.5l3-3h9v12z M3.5 12.5v-9 M3.5 6l4 4 M3.5 8.5l5-5 2 1 2-2"/></svg><div class="t" style="left:111px;top:323px;font-size:13.7px;color:#fcfcfc;">Worksheet - Toy Dataset</div><svg class="r" style="left:73.5px;top:352.5px;color:#fcfcfc;" width="12" height="12" viewBox="0 0 12 12" fill="none" stroke="#fcfcfc" stroke-width="1"><path d="M.5 .5l5.5 5.5-5.5 5.5" stroke-width="1.1"/></svg><div class="r" style="left:82px;top:358px;width:5px;height:1px;background:#5b5e63;"></div><svg class="r" style="left:91px;top:351px;color:#fcfcfc;" width="13" height="13" viewBox="0 0 13 13" fill="none" stroke="#fcfcfc" stroke-width="1"><rect x="0" y="0" width="13" height="13" fill="#fcfcfc" stroke="none"/><g fill="#000" stroke="none"><rect x="1.5" y="1.5" width="2.5" height="2"/><rect x="5.3" y="1.5" width="2.5" height="2"/><rect x="9" y="1.5" width="2.5" height="2"/><rect x="1.5" y="5.5" width="2.5" height="2"/><rect x="5.3" y="5.5" width="2.5" height="2"/><rect x="9" y="5.5" width="2.5" height="2"/><rect x="1.5" y="9.5" width="2.5" height="2"/><rect x="5.3" y="9.5" width="2.5" height="2"/><rect x="9" y="9.5" width="2.5" height="2"/></g><rect x="1.5" y="1.5" width="2.5" height="1.2" fill="#1d99f3" stroke="none"/></svg><div class="t" style="left:111px;top:349px;font-size:13.7px;color:#fcfcfc;">Toy Dataset</div><div class="r" style="left:46px;top:371px;width:371px;height:26px;background:#1d1f22;"></div><div class="r" style="left:86px;top:371px;width:331px;height:26px;background:#1d3e50;"></div><svg class="r" style="left:70.5px;top:381px;color:#fcfcfc;" width="11" height="11" viewBox="0 0 11 11" fill="none" stroke="#fcfcfc" stroke-width="1"><path d="M.5 1l5 5 5-5" stroke-width="1.1"/></svg><div class="r" style="left:82px;top:384px;width:5px;height:1px;background:#5b5e63;"></div><svg class="r" style="left:90px;top:377px;color:#fcfcfc;" width="14" height="14" viewBox="0 0 13 13" fill="none" stroke="#fcfcfc" stroke-width="1"><circle cx="6.5" cy="6.5" r="6.2" fill="#3a3d41" stroke="#5a5d61" stroke-width="0.8"/><path d="M6 2.5v4.5h3" stroke="#2196f3" stroke-width="1"/></svg><div class="t" style="left:111px;top:375px;font-size:13.7px;color:#fcfcfc;">Seasonal Decomposition for Passengers</div><svg class="r" style="left:90.5px;top:407px;color:#fcfcfc;" width="11" height="11" viewBox="0 0 11 11" fill="none" stroke="#fcfcfc" stroke-width="1"><path d="M.5 1l5 5 5-5" stroke-width="1.1"/></svg><div class="r" style="left:102px;top:410px;width:5px;height:1px;background:#5b5e63;"></div><svg class="r" style="left:111px;top:403px;color:#fcfcfc;" width="13" height="13" viewBox="0 0 13 13" fill="none" stroke="#fcfcfc" stroke-width="1"><rect x="0" y="0" width="13" height="13" fill="#fcfcfc" stroke="none"/><g fill="#000" stroke="none"><rect x="1.5" y="1.5" width="2.5" height="2"/><rect x="5.3" y="1.5" width="2.5" height="2"/><rect x="9" y="1.5" width="2.5" height="2"/><rect x="1.5" y="5.5" width="2.5" height="2"/><rect x="5.3" y="5.5" width="2.5" height="2"/><rect x="9" y="5.5" width="2.5" height="2"/><rect x="1.5" y="9.5" width="2.5" height="2"/><rect x="5.3" y="9.5" width="2.5" height="2"/><rect x="9" y="9.5" width="2.5" height="2"/></g><rect x="1.5" y="1.5" width="2.5" height="1.2" fill="#1d99f3" stroke="none"/></svg><div class="t" style="left:131px;top:401px;font-size:13.7px;color:#fcfcfc;">Result</div><div class="r" style="left:46px;top:423px;width:371px;height:26px;background:#1d1f22;"></div><div class="r" style="left:116px;top:436px;width:10px;height:1px;background:#5b5e63;"></div><svg class="r" style="left:131px;top:430px;color:#fcfcfc;" width="13" height="13" viewBox="0 0 13 13" fill="none" stroke="#fcfcfc" stroke-width="1"><path d="M0 1.5h13M0 4.5h8M0 7.5h13M0 10.5h8" stroke-width="1.3"/><rect x="10" y="10" width="2" height="2" fill="currentColor" stroke="none"/></svg><div class="t" style="left:151px;top:427px;font-size:13.7px;color:#fcfcfc;">Trend</div><div class="r" style="left:116px;top:462px;width:10px;height:1px;background:#5b5e63;"></div><svg class="r" style="left:131px;top:456px;color:#fcfcfc;" width="13" height="13" viewBox="0 0 13 13" fill="none" stroke="#fcfcfc" stroke-width="1"><path d="M0 1.5h13M0 4.5h8M0 7.5h13M0 10.5h8" stroke-width="1.3"/><rect x="10" y="10" width="2" height="2" fill="currentColor" stroke="none"/></svg><div class="t" style="left:151px;top:453px;font-size:13.7px;color:#fcfcfc;">Seasonal</div><div class="r" style="left:46px;top:475px;width:371px;height:26px;background:#1d1f22;"></div><div class="r" style="left:116px;top:488px;width:10px;height:1px;background:#5b5e63;"></div><svg class="r" style="left:131px;top:482px;color:#fcfcfc;" width="13" height="13" viewBox="0 0 13 13" fill="none" stroke="#fcfcfc" stroke-width="1"><path d="M0 1.5h13M0 4.5h8M0 7.5h13M0 10.5h8" stroke-width="1.3"/><rect x="10" y="10" width="2" height="2" fill="currentColor" stroke="none"/></svg><div class="t" style="left:151px;top:479px;font-size:13.7px;color:#fcfcfc;">Residual</div><svg class="r" style="left:93.5px;top:508.5px;color:#fcfcfc;" width="12" height="12" viewBox="0 0 12 12" fill="none" stroke="#fcfcfc" stroke-width="1"><path d="M.5 .5l5.5 5.5-5.5 5.5" stroke-width="1.1"/></svg><div class="r" style="left:102px;top:514px;width:5px;height:1px;background:#5b5e63;"></div><svg class="r" style="left:111px;top:507px;color:#fcfcfc;" width="14" height="14" viewBox="0 0 14 14" fill="none" stroke="#fcfcfc" stroke-width="1"><path d="M.5 12.5V3.5l3-3h9v12z M3.5 12.5v-9 M3.5 6l4 4 M3.5 8.5l5-5 2 1 2-2"/></svg><div class="t" style="left:131px;top:505px;font-size:13.7px;color:#fcfcfc;">Worksheet</div><div class="r" style="left:46px;top:527px;width:371px;height:26px;background:#1d1f22;"></div><svg class="r" style="left:73.5px;top:534.5px;color:#fcfcfc;" width="12" height="12" viewBox="0 0 12 12" fill="none" stroke="#fcfcfc" stroke-width="1"><path d="M.5 .5l5.5 5.5-5.5 5.5" stroke-width="1.1"/></svg><div class="r" style="left:82px;top:540px;width:5px;height:1px;background:#5b5e63;"></div><svg class="r" style="left:91px;top:533px;color:#fcfcfc;" width="14" height="14" viewBox="0 0 14 14" fill="none" stroke="#fcfcfc" stroke-width="1"><path d="M.5 12.5V3.5l3-3h9v12z M3.5 12.5v-9 M3.5 6l4 4 M3.5 8.5l5-5 2 1 2-2"/></svg><div class="t" style="left:111px;top:531px;font-size:13.7px;color:#fcfcfc;">Worksheet - Passengers</div><svg class="r" style="left:73.5px;top:560.5px;color:#fcfcfc;" width="12" height="12" viewBox="0 0 12 12" fill="none" stroke="#fcfcfc" stroke-width="1"><path d="M.5 .5l5.5 5.5-5.5 5.5" stroke-width="1.1"/></svg><div class="r" style="left:82px;top:566px;width:5px;height:1px;background:#5b5e63;"></div><svg class="r" style="left:90px;top:559px;color:#fcfcfc;" width="14" height="14" viewBox="0 0 13 13" fill="none" stroke="#fcfcfc" stroke-width="1"><circle cx="6.5" cy="6.5" r="6.2" fill="#3a3d41" stroke="#5a5d61" stroke-width="0.8"/><path d="M6 2.5v4.5h3" stroke="#2196f3" stroke-width="1"/></svg><div class="t" style="left:111px;top:557px;font-size:13.7px;color:#fcfcfc;">Seasonal Decomposition for Toy Dataset</div><div class="r" style="left:56px;top:189px;width:1px;height:6px;background:#5b5e63;"></div><div class="r" style="left:76px;top:215px;width:1px;height:6px;background:#5b5e63;"></div><div class="r" style="left:76px;top:235px;width:1px;height:12px;background:#5b5e63;"></div><div class="r" style="left:76px;top:261px;width:1px;height:12px;background:#5b5e63;"></div><div class="r" style="left:76px;top:287px;width:1px;height:12px;background:#5b5e63;"></div><div class="r" style="left:76px;top:313px;width:1px;height:12px;background:#5b5e63;"></div><div class="r" style="left:76px;top:339px;width:1px;height:12px;background:#5b5e63;"></div><div class="r" style="left:76px;top:365px;width:1px;height:12px;background:#5b5e63;"></div><div class="r" style="left:76px;top:391px;width:1px;height:142px;background:#5b5e63;"></div><div class="r" style="left:76px;top:547px;width:1px;height:12px;background:#5b5e63;"></div><div class="r" style="left:96px;top:397px;width:1px;height:6px;background:#5b5e63;"></div><div class="r" style="left:96px;top:417px;width:1px;height:90px;background:#5b5e63;"></div><div class="r" style="left:116px;top:423px;width:1px;height:65px;background:#5b5e63;"></div><div class="r" style="left:418px;top:105px;width:874px;height:21px;background:#202326;"></div><div class="r" style="left:418px;top:105px;width:874px;height:1px;background:#3b3f44;"></div><div class="r" style="left:418px;top:126px;width:874px;height:2px;background:#3b3f44;"></div><div class="r" style="left:481px;top:109px;width:1px;height:17px;background:#3b3f44;"></div><div class="t" style="left:428px;top:107px;font-size:13.7px;color:#3a3d41;">Pa...</div><svg class="r" style="left:462px;top:112px;color:#000000;" width="9" height="9" viewBox="0 0 9 9" fill="none" stroke="#000000" stroke-width="1"><path d="M.5 .5l8 8M8.5 .5l-8 8" stroke-width="1.3"/></svg><div class="r" style="left:548px;top:109px;width:1px;height:17px;background:#3b3f44;"></div><div class="t" style="left:493px;top:107px;font-size:13.7px;color:#3a3d41;">CO2</div><svg class="r" style="left:529px;top:112px;color:#000000;" width="9" height="9" viewBox="0 0 9 9" fill="none" stroke="#000000" stroke-width="1"><path d="M.5 .5l8 8M8.5 .5l-8 8" stroke-width="1.3"/></svg><div class="r" style="left:634px;top:109px;width:1px;height:17px;background:#3b3f44;"></div><div class="t" style="left:561px;top:107px;font-size:13.7px;color:#3a3d41;">Electr...</div><svg class="r" style="left:613px;top:112px;color:#000000;" width="9" height="9" viewBox="0 0 9 9" fill="none" stroke="#000000" stroke-width="1"><path d="M.5 .5l8 8M8.5 .5l-8 8" stroke-width="1.3"/></svg><div class="r" style="left:757px;top:109px;width:1px;height:17px;background:#3b3f44;"></div><div class="t" style="left:644px;top:107px;font-size:13.7px;color:#3a3d41;">Toy Dataset ...</div><svg class="r" style="left:736px;top:112px;color:#000000;" width="9" height="9" viewBox="0 0 9 9" fill="none" stroke="#000000" stroke-width="1"><path d="M.5 .5l8 8M8.5 .5l-8 8" stroke-width="1.3"/></svg><div class="r" style="left:875px;top:109px;width:1px;height:17px;background:#3b3f44;"></div><div class="t" style="left:767px;top:107px;font-size:13.7px;color:#3a3d41;">Worksheet ...</div><svg class="r" style="left:855px;top:112px;color:#000000;" width="9" height="9" viewBox="0 0 9 9" fill="none" stroke="#000000" stroke-width="1"><path d="M.5 .5l8 8M8.5 .5l-8 8" stroke-width="1.3"/></svg><div class="r" style="left:960px;top:109px;width:1px;height:17px;background:#3b3f44;"></div><div class="t" style="left:887px;top:107px;font-size:13.7px;color:#3a3d41;">Toy D...</div><svg class="r" style="left:940px;top:112px;color:#000000;" width="9" height="9" viewBox="0 0 9 9" fill="none" stroke="#000000" stroke-width="1"><path d="M.5 .5l8 8M8.5 .5l-8 8" stroke-width="1.3"/></svg><div class="r" style="left:960px;top:105px;width:70px;height:21px;background:#31363b;"></div><div class="t" style="left:970.5px;top:107px;font-size:13.7px;color:#fcfcfc;">Wo...</div><svg class="r" style="left:1010px;top:112px;color:#fcfcfc;" width="9" height="9" viewBox="0 0 9 9" fill="none" stroke="#fcfcfc" stroke-width="1"><path d="M.5 .5l8 8M8.5 .5l-8 8" stroke-width="1.3"/></svg><div class="r" style="left:1146px;top:109px;width:1px;height:17px;background:#3b3f44;"></div><div class="t" style="left:1041.5px;top:107px;font-size:13.7px;color:#3a3d41;">Worksheet...</div><svg class="r" style="left:1127px;top:112px;color:#000000;" width="9" height="9" viewBox="0 0 9 9" fill="none" stroke="#000000" stroke-width="1"><path d="M.5 .5l8 8M8.5 .5l-8 8" stroke-width="1.3"/></svg><div class="r" style="left:1216px;top:109px;width:1px;height:17px;background:#3b3f44;"></div><div class="t" style="left:1157px;top:107px;font-size:13.7px;color:#3a3d41;">Wo...</div><svg class="r" style="left:1196px;top:112px;color:#000000;" width="9" height="9" viewBox="0 0 9 9" fill="none" stroke="#000000" stroke-width="1"><path d="M.5 .5l8 8M8.5 .5l-8 8" stroke-width="1.3"/></svg><svg class="r" style="left:1221px;top:114px;color:#000000;" width="8" height="8" viewBox="0 0 8 8" fill="none" stroke="#000000" stroke-width="1"><path d="M0 0h8L4 4z" fill="currentColor" stroke="none"/></svg><svg class="r" style="left:1240px;top:111px;color:#000000;" width="10" height="10" viewBox="0 0 10 10" fill="none" stroke="#000000" stroke-width="1"><path d="M3 1h5v5H6 M1 4h5v5H1z" stroke-width="2" stroke-linejoin="miter"/></svg><svg class="r" style="left:1260px;top:111px;color:#000000;height:12px;overflow:visible" width="8" height="8" viewBox="0 0 8 8" fill="none" stroke="#000000" stroke-width="1"><path d="M1.5 .5h5v6h-5z M0 7h8 M4 7v5" stroke-width="1.6"/><path d="M3.2 1.3h1.6v5H3.2z" fill="none" stroke="none"/></svg><svg class="r" style="left:1278px;top:112px;color:#000000;" width="9" height="9" viewBox="0 0 9 9" fill="none" stroke="#000000" stroke-width="1"><path d="M.5 .5l8 8M8.5 .5l-8 8" stroke-width="1.3"/></svg><div class="r" style="left:418px;top:1332px;width:874px;height:1px;background:#55585c;"></div><div class="r" style="left:1292px;top:104px;width:1px;height:1268px;background:#0f1113;"></div><div class="r" style="left:1293px;top:105px;width:522px;height:19px;background:#202326;"></div><div class="r" style="left:1293px;top:105px;width:259px;height:22px;background:linear-gradient(#282b30, #3c4048 70%);"></div><div class="r" style="left:1551px;top:106px;width:1px;height:18px;background:#45494e;"></div><div class="t" style="left:1303px;top:104.5px;font-size:13.7px;color:#fcfcfc;">Properties: Seasonal Decomposition</div><svg class="r" style="left:1531.5px;top:110.5px;color:#000000;" width="9" height="9" viewBox="0 0 9 9" fill="none" stroke="#000000" stroke-width="1"><path d="M.5 .5l8 8M8.5 .5l-8 8" stroke-width="1.3"/></svg><svg class="r" style="left:1744px;top:112px;color:#000000;" width="8" height="8" viewBox="0 0 8 8" fill="none" stroke="#000000" stroke-width="1"><path d="M0 0h8L4 4z" fill="currentColor" stroke="none"/></svg><svg class="r" style="left:1763px;top:109px;color:#000000;" width="10" height="10" viewBox="0 0 10 10" fill="none" stroke="#000000" stroke-width="1"><path d="M3 1h5v5H6 M1 4h5v5H1z" stroke-width="2" stroke-linejoin="miter"/></svg><svg class="r" style="left:1783px;top:109px;color:#000000;height:12px;overflow:visible" width="8" height="8" viewBox="0 0 8 8" fill="none" stroke="#000000" stroke-width="1"><path d="M1.5 .5h5v6h-5z M0 7h8 M4 7v5" stroke-width="1.6"/><path d="M3.2 1.3h1.6v5H3.2z" fill="none" stroke="none"/></svg><svg class="r" style="left:1801px;top:110px;color:#000000;" width="9" height="9" viewBox="0 0 9 9" fill="none" stroke="#000000" stroke-width="1"><path d="M.5 .5l8 8M8.5 .5l-8 8" stroke-width="1.3"/></svg><div class="t" style="left:1299px;top:140px;font-size:13.7px;color:#fcfcfc;">Name:</div><div class="t" style="left:1299px;top:180px;font-size:13.7px;color:#fcfcfc;">Comment:</div><div class="t" style="left:1299px;top:262px;font-size:13.7px;color:#fcfcfc;">X-Data:</div><div class="t" style="left:1299px;top:300px;font-size:13.7px;color:#fcfcfc;">Y-Data:</div><div class="t" style="left:1299px;top:380px;font-size:13.7px;color:#fcfcfc;">Method:</div><div class="t" style="left:1299px;top:436px;font-size:13.7px;color:#fcfcfc;">Period:</div><div class="t" style="left:1299px;top:468px;font-size:13.7px;color:#fcfcfc;">Robust:</div><div class="t" style="left:1299px;top:518px;font-size:13.7px;color:#fcfcfc;">Seasonal Length:</div><div class="t" style="left:1299px;top:556px;font-size:13.7px;color:#fcfcfc;">Trend Length:</div><div class="t" style="left:1299px;top:594px;font-size:13.7px;color:#fcfcfc;">Low-Pass Length:</div><div class="t" style="left:1299px;top:650px;font-size:13.7px;color:#fcfcfc;">Seasonal Degree:</div><div class="t" style="left:1299px;top:688px;font-size:13.7px;color:#fcfcfc;">Trend Degree:</div><div class="t" style="left:1299px;top:726px;font-size:13.7px;color:#fcfcfc;">Low-Pass Degree:</div><div class="t" style="left:1299px;top:782px;font-size:13.7px;color:#fcfcfc;">Seasonal Jump:</div><div class="t" style="left:1299px;top:820px;font-size:13.7px;color:#fcfcfc;">Trend Jump:</div><div class="t" style="left:1299px;top:858px;font-size:13.7px;color:#fcfcfc;">Low-Pass Jump:</div><div class="t" style="left:1299px;top:231px;font-size:13.7px;color:#fcfcfc;font-weight:bold">Data</div><div class="t" style="left:1299px;top:349px;font-size:13.7px;color:#fcfcfc;font-weight:bold">Options</div><div class="r" style="left:1430px;top:134px;width:378px;height:30px;background:#141618;border:1px solid #25282c;border-radius:4px;box-sizing:border-box;"></div><div class="t" style="left:1437px;top:140px;font-size:13.7px;color:#fcfcfc;">Seasonal Decomposition for Passengers</div><div class="r" style="left:1430px;top:172px;width:378px;height:34px;background:#141618;border:1px solid #25282c;border-radius:4px;box-sizing:border-box;"></div><div class="r" style="left:1609px;top:197px;width:20px;height:9px;background:#4a4d52;"></div><div class="r" style="left:1430px;top:256px;width:378px;height:30px;background:#292c30;border:1px solid #4d5156;border-radius:4px;box-sizing:border-box;"></div><div class="t" style="left:1436.5px;top:262px;font-size:13.7px;color:#fcfcfc;">index [X]</div><svg class="r" style="left:1791.5px;top:266.5px;color:#fcfcfc;" width="12" height="12" viewBox="0 0 12 12" fill="none" stroke="#fcfcfc" stroke-width="1"><path d="M.5 2l5 5 5-5" stroke-width="1.05"/></svg><div class="r" style="left:1430px;top:294px;width:378px;height:30px;background:#292c30;border:1px solid #4d5156;border-radius:4px;box-sizing:border-box;"></div><div class="t" style="left:1436.5px;top:300px;font-size:13.7px;color:#fcfcfc;">Passengers [Y]</div><svg class="r" style="left:1791.5px;top:304.5px;color:#fcfcfc;" width="12" height="12" viewBox="0 0 12 12" fill="none" stroke="#fcfcfc" stroke-width="1"><path d="M.5 2l5 5 5-5" stroke-width="1.05"/></svg><div class="r" style="left:1430px;top:374px;width:378px;height:30px;background:#292c30;border:1px solid #4d5156;border-radius:4px;box-sizing:border-box;"></div><div class="t" style="left:1436.5px;top:380px;font-size:13.7px;color:#fcfcfc;">STL</div><svg class="r" style="left:1791.5px;top:384.5px;color:#fcfcfc;" width="12" height="12" viewBox="0 0 12 12" fill="none" stroke="#fcfcfc" stroke-width="1"><path d="M.5 2l5 5 5-5" stroke-width="1.05"/></svg><div class="r" style="left:1430px;top:430px;width:378px;height:30px;background:#141618;border:1px solid #25282c;border-radius:4px;box-sizing:border-box;"></div><div class="t" style="left:1437px;top:436px;font-size:13.7px;color:#fcfcfc;">12</div><svg class="r" style="left:1791px;top:436px;color:#fcfcfc;height:19px;overflow:visible" width="11" height="11" viewBox="0 0 11 11" fill="none" stroke="#fcfcfc" stroke-width="1"><path d="M.5 6l5-5 5 5 M.5 11l5 5 5-5" stroke-width="1.1"/></svg><div class="r" style="left:1430px;top:512px;width:378px;height:30px;background:#141618;border:1px solid #25282c;border-radius:4px;box-sizing:border-box;"></div><div class="t" style="left:1437px;top:518px;font-size:13.7px;color:#fcfcfc;">7</div><svg class="r" style="left:1791px;top:518px;color:#fcfcfc;height:19px;overflow:visible" width="11" height="11" viewBox="0 0 11 11" fill="none" stroke="#fcfcfc" stroke-width="1"><path d="M.5 6l5-5 5 5 M.5 11l5 5 5-5" stroke-width="1.1"/></svg><div class="r" style="left:1431px;top:469px;width:16px;height:16px;background:#292c30;border:1px solid #474b51;border-radius:3px;box-sizing:border-box;"></div><div class="r" style="left:1430px;top:550px;width:319px;height:30px;background:#141618;border:1px solid #25282c;border-radius:4px;box-sizing:border-box;"></div><div class="t" style="left:1437px;top:556px;font-size:13.7px;color:#6e7175;">13</div><svg class="r" style="left:1732px;top:556px;color:#6e7175;height:19px;overflow:visible" width="11" height="11" viewBox="0 0 11 11" fill="none" stroke="#6e7175" stroke-width="1"><path d="M.5 6l5-5 5 5 M.5 11l5 5 5-5" stroke-width="1.1"/></svg><div class="r" style="left:1758px;top:557px;width:16px;height:16px;background:#273844;border:1px solid #2b5064;border-radius:3px;box-sizing:border-box;"></div><svg class="r" style="left:1760px;top:559px;color:#fcfcfc;" width="12" height="12" viewBox="0 0 12 12" fill="none" stroke="#fcfcfc" stroke-width="1"><path d="M2 6.5l3 3 5.5-6" stroke-width="2"/></svg><div class="t" style="left:1780px;top:556px;font-size:13.7px;color:#fcfcfc;">Auto</div><div class="r" style="left:1430px;top:588px;width:319px;height:30px;background:#141618;border:1px solid #25282c;border-radius:4px;box-sizing:border-box;"></div><div class="t" style="left:1437px;top:594px;font-size:13.7px;color:#6e7175;">15</div><svg class="r" style="left:1732px;top:594px;color:#6e7175;height:19px;overflow:visible" width="11" height="11" viewBox="0 0 11 11" fill="none" stroke="#6e7175" stroke-width="1"><path d="M.5 6l5-5 5 5 M.5 11l5 5 5-5" stroke-width="1.1"/></svg><div class="r" style="left:1758px;top:595px;width:16px;height:16px;background:#273844;border:1px solid #2b5064;border-radius:3px;box-sizing:border-box;"></div><svg class="r" style="left:1760px;top:597px;color:#fcfcfc;" width="12" height="12" viewBox="0 0 12 12" fill="none" stroke="#fcfcfc" stroke-width="1"><path d="M2 6.5l3 3 5.5-6" stroke-width="2"/></svg><div class="t" style="left:1780px;top:594px;font-size:13.7px;color:#fcfcfc;">Auto</div><div class="r" style="left:1430px;top:644px;width:378px;height:30px;background:#292c30;border:1px solid #4d5156;border-radius:4px;box-sizing:border-box;"></div><div class="t" style="left:1436.5px;top:650px;font-size:13.7px;color:#fcfcfc;">1 - Constant and Trend</div><svg class="r" style="left:1791.5px;top:654.5px;color:#fcfcfc;" width="12" height="12" viewBox="0 0 12 12" fill="none" stroke="#fcfcfc" stroke-width="1"><path d="M.5 2l5 5 5-5" stroke-width="1.05"/></svg><div class="r" style="left:1430px;top:682px;width:378px;height:30px;background:#292c30;border:1px solid #4d5156;border-radius:4px;box-sizing:border-box;"></div><div class="t" style="left:1436.5px;top:688px;font-size:13.7px;color:#fcfcfc;">1 - Constant and Trend</div><svg class="r" style="left:1791.5px;top:692.5px;color:#fcfcfc;" width="12" height="12" viewBox="0 0 12 12" fill="none" stroke="#fcfcfc" stroke-width="1"><path d="M.5 2l5 5 5-5" stroke-width="1.05"/></svg><div class="r" style="left:1430px;top:720px;width:378px;height:30px;background:#292c30;border:1px solid #4d5156;border-radius:4px;box-sizing:border-box;"></div><div class="t" style="left:1436.5px;top:726px;font-size:13.7px;color:#fcfcfc;">1 - Constant and Trend</div><svg class="r" style="left:1791.5px;top:730.5px;color:#fcfcfc;" width="12" height="12" viewBox="0 0 12 12" fill="none" stroke="#fcfcfc" stroke-width="1"><path d="M.5 2l5 5 5-5" stroke-width="1.05"/></svg><div class="r" style="left:1430px;top:776px;width:319px;height:30px;background:#141618;border:1px solid #25282c;border-radius:4px;box-sizing:border-box;"></div><div class="t" style="left:1437px;top:782px;font-size:13.7px;color:#6e7175;">1</div><svg class="r" style="left:1732px;top:782px;color:#6e7175;height:19px;overflow:visible" width="11" height="11" viewBox="0 0 11 11" fill="none" stroke="#6e7175" stroke-width="1"><path d="M.5 6l5-5 5 5 M.5 11l5 5 5-5" stroke-width="1.1"/></svg><div class="r" style="left:1758px;top:783px;width:16px;height:16px;background:#273844;border:1px solid #2b5064;border-radius:3px;box-sizing:border-box;"></div><svg class="r" style="left:1760px;top:785px;color:#fcfcfc;" width="12" height="12" viewBox="0 0 12 12" fill="none" stroke="#fcfcfc" stroke-width="1"><path d="M2 6.5l3 3 5.5-6" stroke-width="2"/></svg><div class="t" style="left:1780px;top:782px;font-size:13.7px;color:#fcfcfc;">Auto</div><div class="r" style="left:1430px;top:814px;width:319px;height:30px;background:#141618;border:1px solid #25282c;border-radius:4px;box-sizing:border-box;"></div><div class="t" style="left:1437px;top:820px;font-size:13.7px;color:#6e7175;">1</div><svg class="r" style="left:1732px;top:820px;color:#6e7175;height:19px;overflow:visible" width="11" height="11" viewBox="0 0 11 11" fill="none" stroke="#6e7175" stroke-width="1"><path d="M.5 6l5-5 5 5 M.5 11l5 5 5-5" stroke-width="1.1"/></svg><div class="r" style="left:1758px;top:821px;width:16px;height:16px;background:#273844;border:1px solid #2b5064;border-radius:3px;box-sizing:border-box;"></div><svg class="r" style="left:1760px;top:823px;color:#fcfcfc;" width="12" height="12" viewBox="0 0 12 12" fill="none" stroke="#fcfcfc" stroke-width="1"><path d="M2 6.5l3 3 5.5-6" stroke-width="2"/></svg><div class="t" style="left:1780px;top:820px;font-size:13.7px;color:#fcfcfc;">Auto</div><div class="r" style="left:1430px;top:852px;width:319px;height:30px;background:#141618;border:1px solid #25282c;border-radius:4px;box-sizing:border-box;"></div><div class="t" style="left:1437px;top:858px;font-size:13.7px;color:#6e7175;">1</div><svg class="r" style="left:1732px;top:858px;color:#6e7175;height:19px;overflow:visible" width="11" height="11" viewBox="0 0 11 11" fill="none" stroke="#6e7175" stroke-width="1"><path d="M.5 6l5-5 5 5 M.5 11l5 5 5-5" stroke-width="1.1"/></svg><div class="r" style="left:1758px;top:859px;width:16px;height:16px;background:#273844;border:1px solid #2b5064;border-radius:3px;box-sizing:border-box;"></div><svg class="r" style="left:1760px;top:861px;color:#fcfcfc;" width="12" height="12" viewBox="0 0 12 12" fill="none" stroke="#fcfcfc" stroke-width="1"><path d="M2 6.5l3 3 5.5-6" stroke-width="2"/></svg><div class="t" style="left:1780px;top:858px;font-size:13.7px;color:#fcfcfc;">Auto</div><div class="r" style="left:1531px;top:1330px;width:74px;height:34px;background:#2b2e32;border-radius:4px;"></div><svg class="r" style="left:1544px;top:1339px;color:#6e7175;" width="16" height="16" viewBox="0 0 16 16" fill="none" stroke="#6e7175" stroke-width="1"><path d="M1.5 15.5V.5h6l4 4v6 M1.5 15.5h8"/><path d="M7.5 .5v4h4z" fill="currentColor"/><circle cx="11.5" cy="13.5" r="1.8" fill="currentColor" stroke="none"/></svg><div class="t" style="left:1566.5px;top:1338px;font-size:13.7px;color:#6e7175;">Load</div><div class="r" style="left:1609px;top:1330px;width:73px;height:34px;background:#292c30;border:1px solid #4d5156;border-radius:4px;box-sizing:border-box;"></div><svg class="r" style="left:1620px;top:1339px;color:#fcfcfc;" width="16" height="16" viewBox="0 0 16 16" fill="none" stroke="#fcfcfc" stroke-width="1"><path d="M.5 .5h11l3 3v6 M.5 .5v15h9 M3.5 .5v5h6v-5 M3.5 15.5v-6h6"/><circle cx="13.5" cy="13.5" r="1.8" fill="currentColor" stroke="none"/></svg><div class="t" style="left:1644px;top:1338px;font-size:13.7px;color:#fcfcfc;">Save</div><div class="r" style="left:1686px;top:1330px;width:121px;height:34px;background:#292c30;border:1px solid #4d5156;border-radius:4px;box-sizing:border-box;"></div><svg class="r" style="left:1697px;top:1339px;color:#fcfcfc;" width="18" height="18" viewBox="0 0 18 18" fill="none" stroke="#fcfcfc" stroke-width="1"><path d="M.5 .5h11l3 3v3 M.5 .5v15h7 M3.5 .5v5h6v-5 M3.5 15.5v-6h4"/><path d="M9 15l1-3 6-6 2 2-6 6z"/></svg><div class="t" style="left:1721px;top:1338px;font-size:13.7px;color:#fcfcfc;">Save Default</div><div class="t" style="left:1568px;top:1376px;font-size:13.7px;color:#fcfcfc;">Memory used 547 MB, peak 4308 MB</div><div class="r" style="left:46px;top:1351px;width:371px;height:1px;background:#3b3e43;"></div><div class="r" style="left:49px;top:1358px;width:201px;height:8px;background:#45484c;border-radius:4px;"></div><svg class="r" style="left:0;top:0" width="1815" height="1396"><polyline points="505.30,367.81 510.60,365.79 515.89,361.07 521.19,362.08 526.49,364.78 531.79,360.06 537.09,355.69 542.38,355.69 547.68,359.73 552.98,365.45 558.28,370.50 563.58,365.79 568.87,366.80 574.17,363.09 579.47,358.04 584.77,360.06 590.07,363.43 595.36,355.35 600.66,348.28 605.96,348.28 611.26,352.32 616.56,360.74 621.85,367.13 627.15,358.38 632.45,356.70 637.75,355.01 643.05,345.59 648.34,350.64 653.64,347.61 658.94,345.59 664.24,338.52 669.54,338.52 674.83,343.57 680.13,350.97 685.43,356.36 690.73,349.63 696.03,347.94 701.32,344.91 706.62,340.54 711.92,344.58 717.22,343.90 722.52,332.12 727.81,328.08 733.11,324.04 738.41,335.15 743.71,341.21 749.01,347.61 754.30,340.20 759.60,339.53 764.90,339.53 770.20,326.06 775.50,326.39 780.79,328.42 786.09,323.70 791.39,316.63 796.69,313.94 801.99,325.72 807.28,334.48 812.58,344.91 817.88,337.84 823.18,336.83 828.48,342.22 833.77,326.39 839.07,329.09 844.37,326.73 849.67,316.63 854.97,303.84 860.26,306.87 865.56,318.31 870.86,328.42 876.16,337.17 881.46,328.42 886.75,324.04 892.05,327.07 897.35,315.62 902.65,314.95 907.95,314.61 913.24,299.46 918.54,282.96 923.84,288.69 929.14,300.47 934.44,313.26 939.73,325.72 945.03,311.92 950.33,309.90 955.63,312.25 960.93,298.79 966.22,300.13 971.52,298.45 976.82,279.60 982.12,266.47 987.42,269.16 992.71,285.99 998.01,302.49 1003.31,314.27 1008.61,302.49 1013.91,299.46 1019.20,304.17 1024.50,285.66 1029.80,288.35 1035.10,285.99 1040.40,263.44 1045.69,248.96 1050.99,248.29 1056.29,269.50 1061.59,288.69 1066.89,302.83 1072.18,292.39 1077.48,291.04 1082.78,298.45 1088.08,283.64 1093.38,288.35 1098.67,283.30 1103.97,259.06 1109.27,240.21 1114.57,235.49 1119.87,269.50 1125.16,284.65 1130.46,301.14 1135.76,292.05 1141.06,284.31 1146.36,290.37 1151.65,268.82 1156.95,272.19 1162.25,264.11 1167.55,246.60 1172.85,221.01 1178.14,217.31 1183.44,249.63 1188.74,268.49 1194.04,283.64 1199.34,269.16 1204.63,265.12 1209.93,273.87 1215.23,264.45 1220.53,250.31 1225.83,246.60 1231.12,225.39 1236.42,196.10 1241.72,201.49 1247.02,234.48 1252.32,250.31 1257.61,274.21 1262.91,260.07" fill="none" stroke="#000" stroke-width="0.8"/><path d="M505.5,196.1 V370.5 H1263.4" fill="none" stroke="#6f6f6f" stroke-width="1.25"/><text x="494.5" y="343.9" text-anchor="end" font-size="16" fill="#606060">200</text><text x="494.5" y="310.2" text-anchor="end" font-size="16" fill="#606060">300</text><text x="494.5" y="276.5" text-anchor="end" font-size="16" fill="#606060">400</text><text x="494.5" y="242.9" text-anchor="end" font-size="16" fill="#606060">500</text><text x="494.5" y="209.2" text-anchor="end" font-size="16" fill="#606060">600</text><text x="606.0" y="404.7" text-anchor="middle" font-size="16" fill="#606060">20</text><text x="711.9" y="404.7" text-anchor="middle" font-size="16" fill="#606060">40</text><text x="817.9" y="404.7" text-anchor="middle" font-size="16" fill="#606060">60</text><text x="923.8" y="404.7" text-anchor="middle" font-size="16" fill="#606060">80</text><text x="1029.8" y="404.7" text-anchor="middle" font-size="16" fill="#606060">100</text><text x="1135.8" y="404.7" text-anchor="middle" font-size="16" fill="#606060">120</text><text x="1241.7" y="404.7" text-anchor="middle" font-size="16" fill="#606060">140</text><text x="854.5" y="196.0" text-anchor="middle" font-size="28" fill="#595959">Original Data</text><text x="457.8" y="283.3" text-anchor="middle" font-size="22.5" fill="#595959" transform="rotate(-90 457.8 283.3)">Passengers</text><polyline points="505.30,662.00 510.60,661.65 515.89,661.29 521.19,660.94 526.49,660.59 531.79,660.23 537.09,659.87 542.38,659.50 547.68,659.13 552.98,658.75 558.28,658.37 563.58,658.00 568.87,657.49 574.17,656.92 579.47,656.28 584.77,655.57 590.07,654.77 595.36,653.89 600.66,652.90 605.96,651.80 611.26,650.63 616.56,649.42 621.85,648.21 627.15,647.04 632.45,645.89 637.75,644.77 643.05,643.66 648.34,642.53 653.64,641.38 658.94,640.23 664.24,639.12 669.54,638.11 674.83,637.16 680.13,636.26 685.43,635.35 690.73,634.40 696.03,633.39 701.32,632.31 706.62,631.16 711.92,629.98 717.22,628.80 722.52,627.61 727.81,626.36 733.11,625.03 738.41,623.66 743.71,622.29 749.01,620.95 754.30,619.68 759.60,618.50 764.90,617.45 770.20,616.55 775.50,615.76 780.79,615.11 786.09,614.58 791.39,614.17 796.69,613.86 801.99,613.60 807.28,613.34 812.58,613.04 817.88,612.67 823.18,612.18 828.48,611.53 833.77,610.73 839.07,609.79 844.37,608.72 849.67,607.52 854.97,606.18 860.26,604.72 865.56,603.17 870.86,601.54 876.16,599.87 881.46,598.17 886.75,596.44 892.05,594.68 897.35,592.88 902.65,591.04 907.95,589.17 913.24,587.28 918.54,585.38 923.84,583.47 929.14,581.56 934.44,579.66 939.73,577.79 945.03,575.98 950.33,574.24 955.63,572.58 960.93,571.00 966.22,569.46 971.52,567.97 976.82,566.49 982.12,565.02 987.42,563.54 992.71,562.05 998.01,560.54 1003.31,559.01 1008.61,557.44 1013.91,555.83 1019.20,554.21 1024.50,552.58 1029.80,550.99 1035.10,549.49 1040.40,548.13 1045.69,546.97 1050.99,546.03 1056.29,545.28 1061.59,544.67 1066.89,544.14 1072.18,543.65 1077.48,543.17 1082.78,542.69 1088.08,542.22 1093.38,541.74 1098.67,541.20 1103.97,540.52 1109.27,539.63 1114.57,538.50 1119.87,537.17 1125.16,535.65 1130.46,534.00 1135.76,532.25 1141.06,530.44 1146.36,528.58 1151.65,526.65 1156.95,524.61 1162.25,522.47 1167.55,520.28 1172.85,518.09 1178.14,515.94 1183.44,513.84 1188.74,511.79 1194.04,509.81 1199.34,507.85 1204.63,505.90 1209.93,504.13 1215.23,502.41 1220.53,500.70 1225.83,499.00 1231.12,497.31 1236.42,495.63 1241.72,493.96 1247.02,492.30 1252.32,490.65 1257.61,489.02 1262.91,487.40" fill="none" stroke="#000" stroke-width="0.8"/><path d="M505.5,487.4 V662.5 H1263.4" fill="none" stroke="#6f6f6f" stroke-width="1.25"/><text x="494.5" y="654.7" text-anchor="end" font-size="16" fill="#606060">150</text><text x="494.5" y="631.3" text-anchor="end" font-size="16" fill="#606060">200</text><text x="494.5" y="607.9" text-anchor="end" font-size="16" fill="#606060">250</text><text x="494.5" y="584.5" text-anchor="end" font-size="16" fill="#606060">300</text><text x="494.5" y="561.1" text-anchor="end" font-size="16" fill="#606060">350</text><text x="494.5" y="537.7" text-anchor="end" font-size="16" fill="#606060">400</text><text x="494.5" y="514.2" text-anchor="end" font-size="16" fill="#606060">450</text><text x="606.0" y="696.7" text-anchor="middle" font-size="16" fill="#606060">20</text><text x="711.9" y="696.7" text-anchor="middle" font-size="16" fill="#606060">40</text><text x="817.9" y="696.7" text-anchor="middle" font-size="16" fill="#606060">60</text><text x="923.8" y="696.7" text-anchor="middle" font-size="16" fill="#606060">80</text><text x="1029.8" y="696.7" text-anchor="middle" font-size="16" fill="#606060">100</text><text x="1135.8" y="696.7" text-anchor="middle" font-size="16" fill="#606060">120</text><text x="1241.7" y="696.7" text-anchor="middle" font-size="16" fill="#606060">140</text><text x="854.5" y="487.3" text-anchor="middle" font-size="28" fill="#595959">Trend Component</text><text x="457.8" y="574.7" text-anchor="middle" font-size="22.5" fill="#595959" transform="rotate(-90 457.8 574.7)">Passengers</text><polyline points="505.30,889.40 510.60,883.52 515.89,875.02 521.19,880.09 526.49,886.41 531.79,876.21 537.09,865.80 542.38,867.60 547.68,875.05 552.98,890.56 558.28,902.45 563.58,890.26 568.87,890.61 574.17,886.03 579.47,874.62 584.77,881.03 590.07,885.35 595.36,873.91 600.66,862.80 605.96,863.16 611.26,875.24 616.56,891.67 621.85,905.39 627.15,892.31 632.45,892.03 637.75,888.99 643.05,874.33 648.34,881.67 653.64,884.35 658.94,871.58 664.24,859.51 669.54,858.63 674.83,875.32 680.13,892.82 685.43,908.57 690.73,894.56 696.03,893.33 701.32,892.40 706.62,873.87 711.92,881.96 717.22,882.72 722.52,869.14 727.81,855.90 733.11,854.04 738.41,875.28 743.71,893.65 749.01,911.33 754.30,896.72 759.60,895.06 764.90,898.27 770.20,875.65 775.50,882.23 780.79,882.72 786.09,865.48 791.39,848.21 796.69,848.92 801.99,874.29 807.28,894.95 812.58,915.61 817.88,899.48 823.18,897.04 828.48,903.80 833.77,877.97 839.07,882.53 844.37,883.39 849.67,861.23 854.97,838.28 860.26,843.56 865.56,871.99 870.86,897.31 876.16,921.61 881.46,902.40 886.75,899.28 892.05,908.68 897.35,880.37 902.65,885.07 907.95,884.75 913.24,855.39 918.54,828.15 923.84,836.44 929.14,869.05 934.44,900.26 939.73,927.14 945.03,905.51 950.33,901.89 955.63,912.77 960.93,883.25 966.22,889.14 971.52,887.25 976.82,849.20 982.12,819.05 987.42,825.41 992.71,866.47 998.01,902.33 1003.31,932.22 1008.61,909.60 1013.91,905.34 1019.20,917.86 1024.50,885.43 1029.80,893.20 1035.10,888.25 1040.40,845.07 1045.69,811.10 1050.99,812.10 1056.29,865.47 1061.59,904.16 1066.89,936.94 1072.18,914.74 1077.48,908.16 1082.78,923.39 1088.08,891.01 1093.38,893.53 1098.67,886.33 1103.97,843.36 1109.27,801.11 1114.57,802.19 1119.87,865.04 1125.16,904.46 1130.46,942.09 1135.76,918.28 1141.06,910.64 1146.36,928.77 1151.65,898.13 1156.95,893.38 1162.25,884.47 1167.55,841.50 1172.85,790.54 1178.14,792.89 1183.44,864.89 1188.74,904.36 1194.04,947.71 1199.34,922.27 1204.63,912.99 1209.93,933.96 1215.23,905.47 1220.53,892.68 1225.83,882.19 1231.12,839.95 1236.42,779.80 1241.72,784.19 1247.02,864.83 1252.32,904.29 1257.61,953.50 1262.91,926.00" fill="none" stroke="#000" stroke-width="0.8"/><path d="M505.5,779.8 V953.5 H1263.4" fill="none" stroke="#6f6f6f" stroke-width="1.25"/><text x="494.5" y="924.2" text-anchor="end" font-size="16" fill="#606060">−50</text><text x="494.5" y="887.5" text-anchor="end" font-size="16" fill="#606060">0</text><text x="494.5" y="850.9" text-anchor="end" font-size="16" fill="#606060">50</text><text x="494.5" y="814.2" text-anchor="end" font-size="16" fill="#606060">100</text><text x="606.0" y="976.2" text-anchor="middle" font-size="16" fill="#606060">20</text><text x="711.9" y="976.2" text-anchor="middle" font-size="16" fill="#606060">40</text><text x="817.9" y="976.2" text-anchor="middle" font-size="16" fill="#606060">60</text><text x="923.8" y="976.2" text-anchor="middle" font-size="16" fill="#606060">80</text><text x="1029.8" y="976.2" text-anchor="middle" font-size="16" fill="#606060">100</text><text x="1135.8" y="976.2" text-anchor="middle" font-size="16" fill="#606060">120</text><text x="1241.7" y="976.2" text-anchor="middle" font-size="16" fill="#606060">140</text><text x="854.5" y="779.7" text-anchor="middle" font-size="28" fill="#595959">Seasonal Component</text><text x="457.8" y="866.6" text-anchor="middle" font-size="22.5" fill="#595959" transform="rotate(-90 457.8 866.6)">Passengers</text><polyline points="505.30,1161.58 510.60,1176.88 515.89,1167.75 521.19,1150.43 526.49,1151.14 531.79,1154.89 537.09,1165.68 542.38,1156.49 547.68,1170.91 552.98,1152.56 558.28,1150.33 563.58,1169.11 568.87,1188.98 574.17,1169.60 579.47,1180.13 584.77,1173.44 590.07,1205.38 595.36,1169.64 600.66,1149.03 605.96,1159.19 611.26,1148.37 616.56,1176.90 621.85,1192.60 627.15,1161.56 632.45,1149.64 637.75,1158.11 643.05,1127.18 648.34,1167.78 653.64,1111.75 658.94,1187.96 664.24,1176.01 669.54,1194.56 674.83,1162.93 680.13,1163.31 685.43,1143.83 690.73,1150.07 696.03,1143.70 701.32,1113.91 706.62,1194.79 711.92,1213.92 717.22,1211.11 722.52,1134.60 727.81,1182.56 733.11,1146.09 738.41,1184.33 743.71,1161.66 749.01,1149.33 754.30,1152.83 759.60,1168.17 764.90,1156.33 770.20,1116.69 775.50,1082.11 780.79,1119.08 786.09,1177.55 791.39,1196.33 796.69,1150.70 801.99,1155.97 807.28,1147.08 812.58,1166.14 817.88,1175.93 823.18,1183.50 828.48,1228.35 833.77,1173.02 839.07,1193.80 844.37,1161.46 849.67,1176.78 854.97,1155.70 860.26,1182.73 865.56,1174.76 870.86,1168.95 876.16,1149.37 881.46,1170.45 886.75,1142.64 892.05,1142.37 897.35,1188.76 902.65,1164.13 907.95,1182.95 913.24,1177.82 918.54,1135.06 923.84,1188.75 929.14,1159.18 934.44,1156.43 939.73,1180.13 945.03,1138.22 950.33,1152.80 955.63,1129.15 960.93,1149.24 966.22,1145.09 971.52,1149.24 976.82,1144.02 982.12,1172.93 987.42,1186.55 992.71,1171.15 998.01,1189.38 1003.31,1175.67 1008.61,1171.33 1013.91,1172.62 1019.20,1174.78 1024.50,1134.71 1029.80,1139.09 1035.10,1155.40 1040.40,1126.70 1045.69,1158.60 1050.99,1151.16 1056.29,1106.17 1061.59,1136.64 1066.89,1128.05 1072.18,1129.83 1077.48,1162.76 1082.78,1175.13 1088.08,1181.47 1093.38,1245.10 1098.67,1222.98 1103.97,1157.37 1109.27,1176.71 1114.57,1104.95 1119.87,1204.66 1125.16,1174.28 1130.46,1180.93 1135.76,1231.50 1141.06,1183.66 1146.36,1168.56 1151.65,1069.20 1156.95,1183.59 1162.25,1143.64 1167.55,1205.50 1172.85,1195.49 1178.14,1142.71 1183.44,1155.32 1188.74,1191.26 1194.04,1137.04 1199.34,1114.36 1204.63,1140.87 1209.93,1147.33 1215.23,1227.12 1220.53,1112.29 1225.83,1150.36 1231.12,1140.60 1236.42,1133.03 1241.72,1207.63 1247.02,1161.32 1252.32,1143.18 1257.61,1183.71 1262.91,1178.01" fill="none" stroke="#000" stroke-width="0.8"/><path d="M505.5,1069.2 V1245.5 H1263.4" fill="none" stroke="#6f6f6f" stroke-width="1.25"/><text x="494.5" y="1250.1" text-anchor="end" font-size="16" fill="#606060">−15</text><text x="494.5" y="1222.6" text-anchor="end" font-size="16" fill="#606060">−10</text><text x="494.5" y="1195.2" text-anchor="end" font-size="16" fill="#606060">−5</text><text x="494.5" y="1167.7" text-anchor="end" font-size="16" fill="#606060">0</text><text x="494.5" y="1140.2" text-anchor="end" font-size="16" fill="#606060">5</text><text x="494.5" y="1112.8" text-anchor="end" font-size="16" fill="#606060">10</text><text x="494.5" y="1085.3" text-anchor="end" font-size="16" fill="#606060">15</text><text x="606.0" y="1266.7" text-anchor="middle" font-size="16" fill="#606060">20</text><text x="711.9" y="1266.7" text-anchor="middle" font-size="16" fill="#606060">40</text><text x="817.9" y="1266.7" text-anchor="middle" font-size="16" fill="#606060">60</text><text x="923.8" y="1266.7" text-anchor="middle" font-size="16" fill="#606060">80</text><text x="1029.8" y="1266.7" text-anchor="middle" font-size="16" fill="#606060">100</text><text x="1135.8" y="1266.7" text-anchor="middle" font-size="16" fill="#606060">120</text><text x="1241.7" y="1266.7" text-anchor="middle" font-size="16" fill="#606060">140</text><text x="854.5" y="1069.1" text-anchor="middle" font-size="28" fill="#595959">Residual Component</text><text x="464" y="1157.2" text-anchor="middle" font-size="22.5" fill="#595959" transform="rotate(-90 464 1157.2)">Passengers</text><text x="884" y="1287" text-anchor="middle" font-size="24" fill="#595959">index</text></svg>
</body></html>
